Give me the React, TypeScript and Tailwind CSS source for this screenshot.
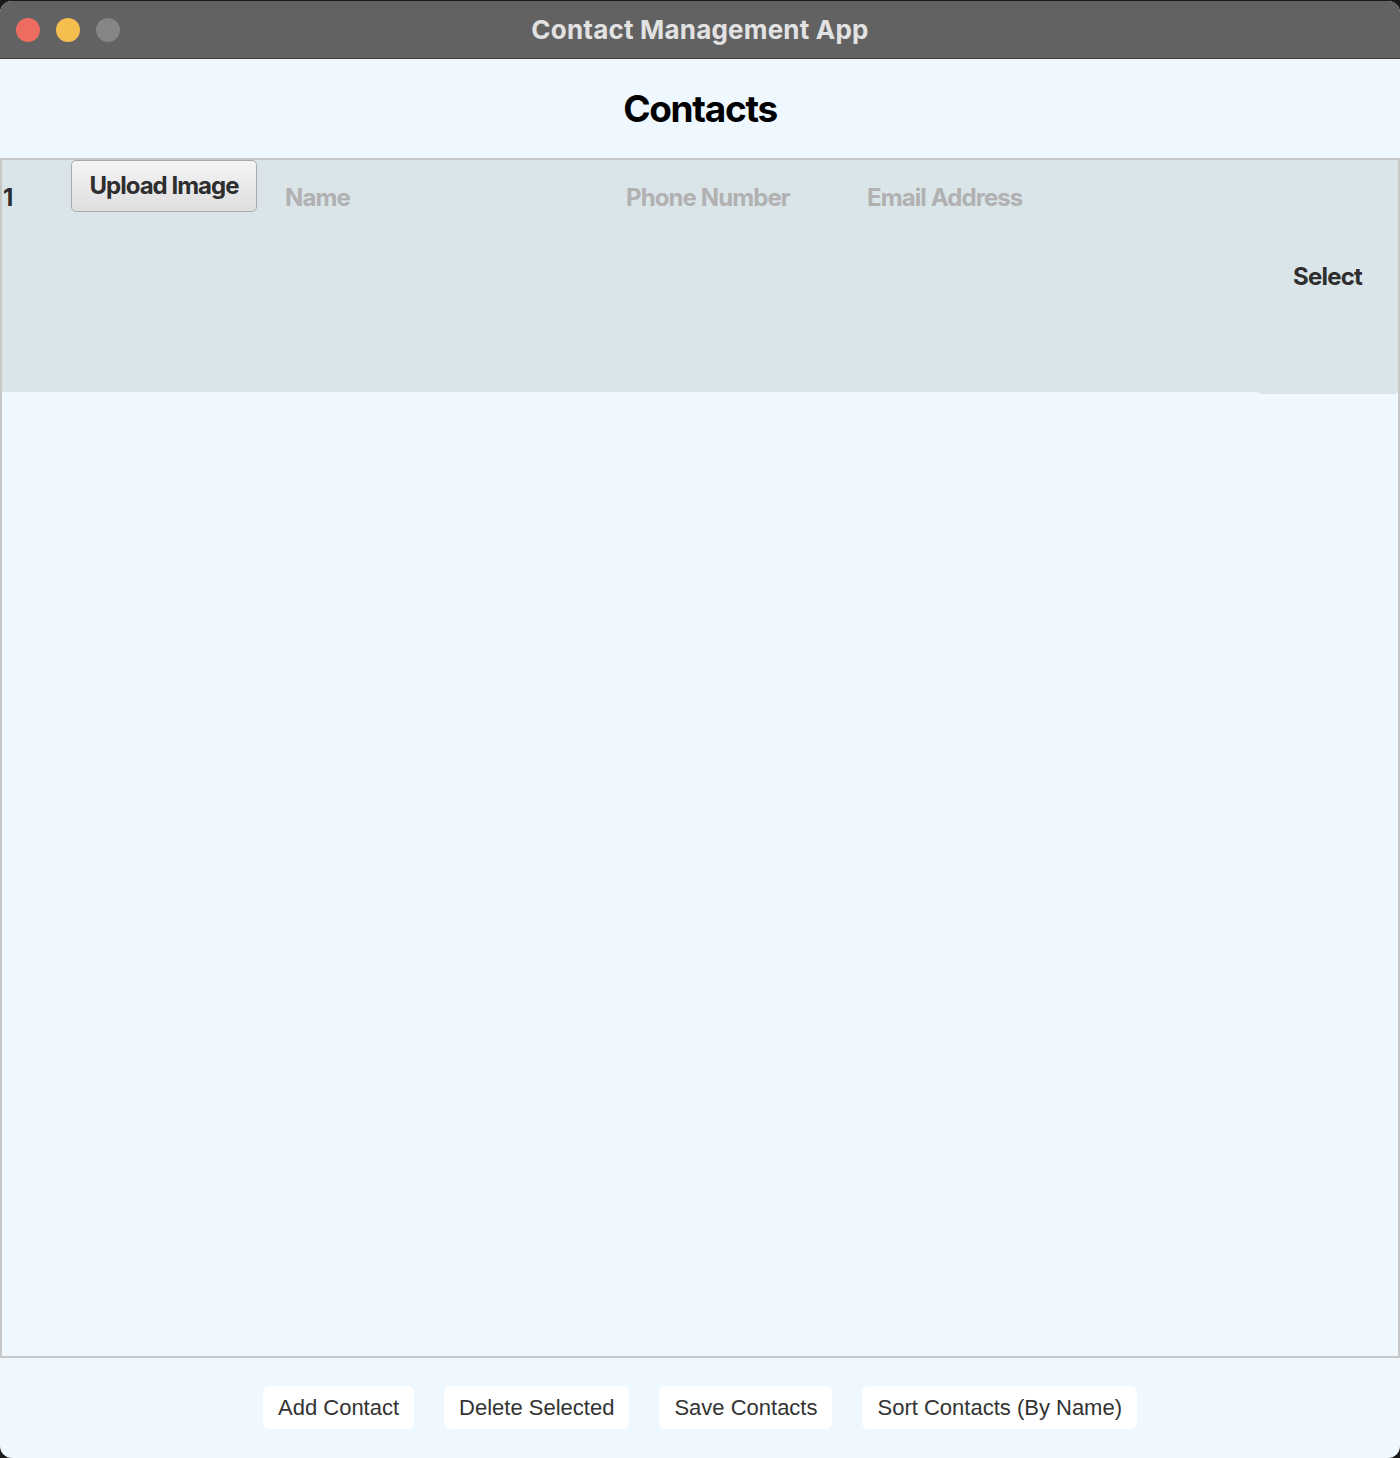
import React from "react";

const headerCols = [
  { label: "Name", className: "w-[341px]" },
  { label: "Phone Number", className: "w-[241px]" },
  { label: "Email Address", className: "" },
];

const actions = ["Add Contact", "Delete Selected", "Save Contacts", "Sort Contacts (By Name)"];

export default function App() {
  return (
    <div className="w-[1400px] h-[1458px] bg-[#1a1a1a] pt-px">
      <div className="flex flex-col h-[1457px] rounded-[12px] overflow-hidden bg-[#eff7ff] font-['Inter',sans-serif]">
        {/* title bar */}
        <div className="relative h-[58px] shrink-0 flex items-center justify-center bg-[#626262] border-b border-[#3e3e3e]">
          <div className="absolute left-[16px] top-[17px] flex gap-[16px]">
            <span className="w-[24px] h-[24px] rounded-full bg-[#ee6b60]" />
            <span className="w-[24px] h-[24px] rounded-full bg-[#f5bf4f]" />
            <span className="w-[24px] h-[24px] rounded-full bg-[#858585]" />
          </div>
          <span className="text-[26px] font-bold text-[#e2e2e2] tracking-[0.2px]">Contact Management App</span>
        </div>

        {/* heading */}
        <div className="h-[99px] shrink-0 flex items-center justify-center">
          <h1 className="text-[37px] font-bold text-black tracking-[-1.3px]">Contacts</h1>
        </div>

        {/* list */}
        <div className="flex-1 flex flex-col border-2 border-[#c8c8c8]">
          <div className="relative h-[232px] bg-[#dae5e9] flex">
            <div className="w-[69px] pt-[20px] pl-[1px] text-[24px] font-bold text-[#2e2e2e]">1</div>
            <div className="w-[214px]">
              <button
                type="button"
                className="w-[186px] h-[52px] rounded-[5px] border border-[#a9a9a9] bg-gradient-to-b from-[#f5f5f5] to-[#dedede] text-[24px] font-bold text-[#2e2e2e] tracking-[-1px] pb-[1px]"
              >
                Upload Image
              </button>
            </div>
            {headerCols.map((c) => (
              <div key={c.label} className={`${c.className} pt-[20px] text-[24px] font-bold text-[#b1b1b1] tracking-[-0.9px]`}>
                {c.label}
              </div>
            ))}
            <div className="absolute right-[36px] top-[99px] text-[24px] font-bold text-[#2e2e2e] tracking-[-0.8px]">Select</div>
            <div className="absolute right-0 -bottom-[2px] w-[140px] h-[4px] rounded-b-[6px] bg-[#dae5e9]" />
          </div>
        </div>

        {/* actions */}
        <div className="h-[100px] shrink-0 flex items-center justify-center gap-[30px] pb-[2px] font-['Liberation_Sans',sans-serif]">
          {actions.map((a) => (
            <button
              key={a}
              type="button"
              className="h-[43px] px-[15px] rounded-[6px] bg-white text-[22px] text-[#333]"
            >
              {a}
            </button>
          ))}
        </div>
      </div>
    </div>
  );
}
